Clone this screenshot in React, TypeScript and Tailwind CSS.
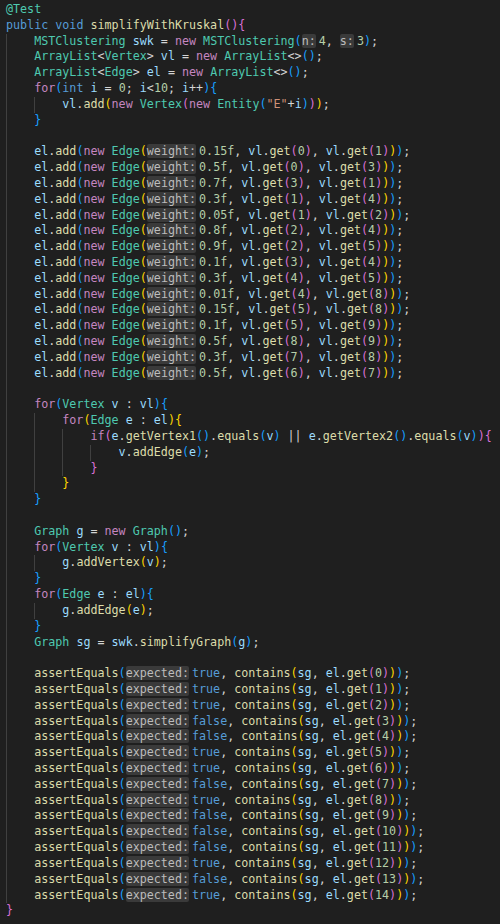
type Tok = [string, string]

const color: Record<string, string> = {
  kw: "text-[#569cd6]",
  ctl: "text-[#c586c0]",
  ty: "text-[#4ec9b0]",
  fn: "text-[#dcdcaa]",
  va: "text-[#9cdcfe]",
  nu: "text-[#b5cea8]",
  st: "text-[#ce9178]",
  pu: "text-[#d4d4d4]",
  b1: "text-[#ffd700]",
  b2: "text-[#da70d6]",
  b3: "text-[#179fff]",
}

type Line = { indent: number; toks: Tok[] }

const edges: [string, number, number][] = [
  ["0.15f", 0, 1],
  ["0.5f", 0, 3],
  ["0.7f", 3, 1],
  ["0.3f", 1, 4],
  ["0.05f", 1, 2],
  ["0.8f", 2, 4],
  ["0.9f", 2, 5],
  ["0.1f", 3, 4],
  ["0.3f", 4, 5],
  ["0.01f", 4, 8],
  ["0.15f", 5, 8],
  ["0.1f", 5, 9],
  ["0.5f", 8, 9],
  ["0.3f", 7, 8],
  ["0.5f", 6, 7],
]

const expected = [
  true, true, true, false, false, true, true, false,
  true, false, false, false, true, false, true,
]

const forEach = (type: string, v: string, list: string, b: string): Tok[] => [
  ["ctl", "for"], [b, "("], ["ty", type], ["pu", " "], ["va", v],
  ["pu", " : "], ["va", list], [b, ")"], [b, "{"],
]

const lines: Line[] = [
  { indent: 0, toks: [["ty", "@Test"]] },
  {
    indent: 0,
    toks: [["kw", "public"], ["pu", " "], ["kw", "void"], ["pu", " "], ["fn", "simplifyWithKruskal"], ["b2", "(){"]],
  },
  {
    indent: 1,
    toks: [
      ["ty", "MSTClustering"], ["pu", " "], ["va", "swk"], ["pu", " = "], ["ctl", "new"], ["pu", " "],
      ["ty", "MSTClustering"], ["b3", "("], ["hint", "n:"], ["nu", "4"], ["pu", ", "], ["hint", "s:"],
      ["nu", "3"], ["b3", ")"], ["pu", ";"],
    ],
  },
  {
    indent: 1,
    toks: [
      ["ty", "ArrayList"], ["pu", "<"], ["ty", "Vertex"], ["pu", "> "], ["va", "vl"], ["pu", " = "],
      ["ctl", "new"], ["pu", " "], ["ty", "ArrayList"], ["pu", "<>"], ["b3", "()"], ["pu", ";"],
    ],
  },
  {
    indent: 1,
    toks: [
      ["ty", "ArrayList"], ["pu", "<"], ["ty", "Edge"], ["pu", "> "], ["va", "el"], ["pu", " = "],
      ["ctl", "new"], ["pu", " "], ["ty", "ArrayList"], ["pu", "<>"], ["b3", "()"], ["pu", ";"],
    ],
  },
  {
    indent: 1,
    toks: [
      ["ctl", "for"], ["b3", "("], ["kw", "int"], ["pu", " "], ["va", "i"], ["pu", " = "], ["nu", "0"],
      ["pu", "; "], ["va", "i"], ["pu", "<"], ["nu", "10"], ["pu", "; "], ["va", "i"], ["pu", "++"],
      ["b3", "){"],
    ],
  },
  {
    indent: 2,
    toks: [
      ["va", "vl"], ["pu", "."], ["fn", "add"], ["b1", "("], ["ctl", "new"], ["pu", " "], ["ty", "Vertex"],
      ["b2", "("], ["ctl", "new"], ["pu", " "], ["ty", "Entity"], ["b3", "("], ["st", '"E"'], ["pu", "+"],
      ["va", "i"], ["b3", ")"], ["b2", ")"], ["b1", ")"], ["pu", ";"],
    ],
  },
  { indent: 1, toks: [["b3", "}"]] },
  { indent: 1, toks: [] },
  ...edges.map(([w, a, b]) => ({
    indent: 1,
    toks: [
      ["va", "el"], ["pu", "."], ["fn", "add"], ["b3", "("], ["ctl", "new"], ["pu", " "], ["ty", "Edge"],
      ["b1", "("], ["hint", "weight:"], ["nu", w], ["pu", ", "], ["va", "vl"], ["pu", "."], ["fn", "get"],
      ["b2", "("], ["nu", String(a)], ["b2", ")"], ["pu", ", "], ["va", "vl"], ["pu", "."], ["fn", "get"],
      ["b2", "("], ["nu", String(b)], ["b2", ")"], ["b1", ")"], ["b3", ")"], ["pu", ";"],
    ] as Tok[],
  })),
  { indent: 1, toks: [] },
  { indent: 1, toks: forEach("Vertex", "v", "vl", "b3") },
  { indent: 2, toks: forEach("Edge", "e", "el", "b1") },
  {
    indent: 3,
    toks: [
      ["ctl", "if"], ["b2", "("], ["va", "e"], ["pu", "."], ["fn", "getVertex1"], ["b3", "()"], ["pu", "."],
      ["fn", "equals"], ["b3", "("], ["va", "v"], ["b3", ")"], ["pu", " || "], ["va", "e"], ["pu", "."],
      ["fn", "getVertex2"], ["b3", "()"], ["pu", "."], ["fn", "equals"], ["b3", "("], ["va", "v"],
      ["b3", ")"], ["b2", "){"],
    ],
  },
  {
    indent: 4,
    toks: [["va", "v"], ["pu", "."], ["fn", "addEdge"], ["b3", "("], ["va", "e"], ["b3", ")"], ["pu", ";"]],
  },
  { indent: 3, toks: [["b2", "}"]] },
  { indent: 2, toks: [["b1", "}"]] },
  { indent: 1, toks: [["b3", "}"]] },
  { indent: 1, toks: [] },
  {
    indent: 1,
    toks: [
      ["ty", "Graph"], ["pu", " "], ["va", "g"], ["pu", " = "], ["ctl", "new"], ["pu", " "], ["ty", "Graph"],
      ["b3", "()"], ["pu", ";"],
    ],
  },
  { indent: 1, toks: forEach("Vertex", "v", "vl", "b3") },
  {
    indent: 2,
    toks: [["va", "g"], ["pu", "."], ["fn", "addVertex"], ["b1", "("], ["va", "v"], ["b1", ")"], ["pu", ";"]],
  },
  { indent: 1, toks: [["b3", "}"]] },
  { indent: 1, toks: forEach("Edge", "e", "el", "b3") },
  {
    indent: 2,
    toks: [["va", "g"], ["pu", "."], ["fn", "addEdge"], ["b1", "("], ["va", "e"], ["b1", ")"], ["pu", ";"]],
  },
  { indent: 1, toks: [["b3", "}"]] },
  {
    indent: 1,
    toks: [
      ["ty", "Graph"], ["pu", " "], ["va", "sg"], ["pu", " = "], ["va", "swk"], ["pu", "."],
      ["fn", "simplifyGraph"], ["b3", "("], ["va", "g"], ["b3", ")"], ["pu", ";"],
    ],
  },
  { indent: 1, toks: [] },
  ...expected.map((ok, i) => ({
    indent: 1,
    toks: [
      ["fn", "assertEquals"], ["b3", "("], ["hint", "expected:"], ["kw", ok ? "true" : "false"],
      ["pu", ", "], ["fn", "contains"], ["b1", "("], ["va", "sg"], ["pu", ", "], ["va", "el"], ["pu", "."],
      ["fn", "get"], ["b2", "("], ["nu", String(i)], ["b2", ")"], ["b1", ")"], ["b3", ")"], ["pu", ";"],
    ] as Tok[],
  })),
  { indent: 0, toks: [["b2", "}"]] },
]

function CodeLine({ line }: { line: Line }) {
  return (
    <div className="flex h-[15.82px] whitespace-pre">
      {/* indent guides */}
      {Array.from({ length: line.indent }).map((_, i) => (
        <span key={i} className="w-[4ch] shrink-0 border-l border-[#404040]" />
      ))}
      <span className="leading-[15.82px]">
        {line.toks.map(([kind, text], i) =>
          kind === "hint" ? (
            <span
              key={i}
              className="mr-[3px] inline-block rounded-[2px] bg-[#3a3a3a] leading-[14px] text-[#bcbcbc]"
            >
              {text}
            </span>
          ) : (
            <span key={i} className={color[kind]}>
              {text}
            </span>
          )
        )}
      </span>
    </div>
  )
}

export default function App() {
  return (
    <div className="h-[924px] w-full overflow-hidden bg-[#1f1f1f] pl-[6px] pt-[2px] font-['DejaVu_Sans_Mono',monospace] text-[11.7px] text-[#d4d4d4]">
      {lines.map((line, i) => (
        <CodeLine key={i} line={line} />
      ))}
    </div>
  )
}
